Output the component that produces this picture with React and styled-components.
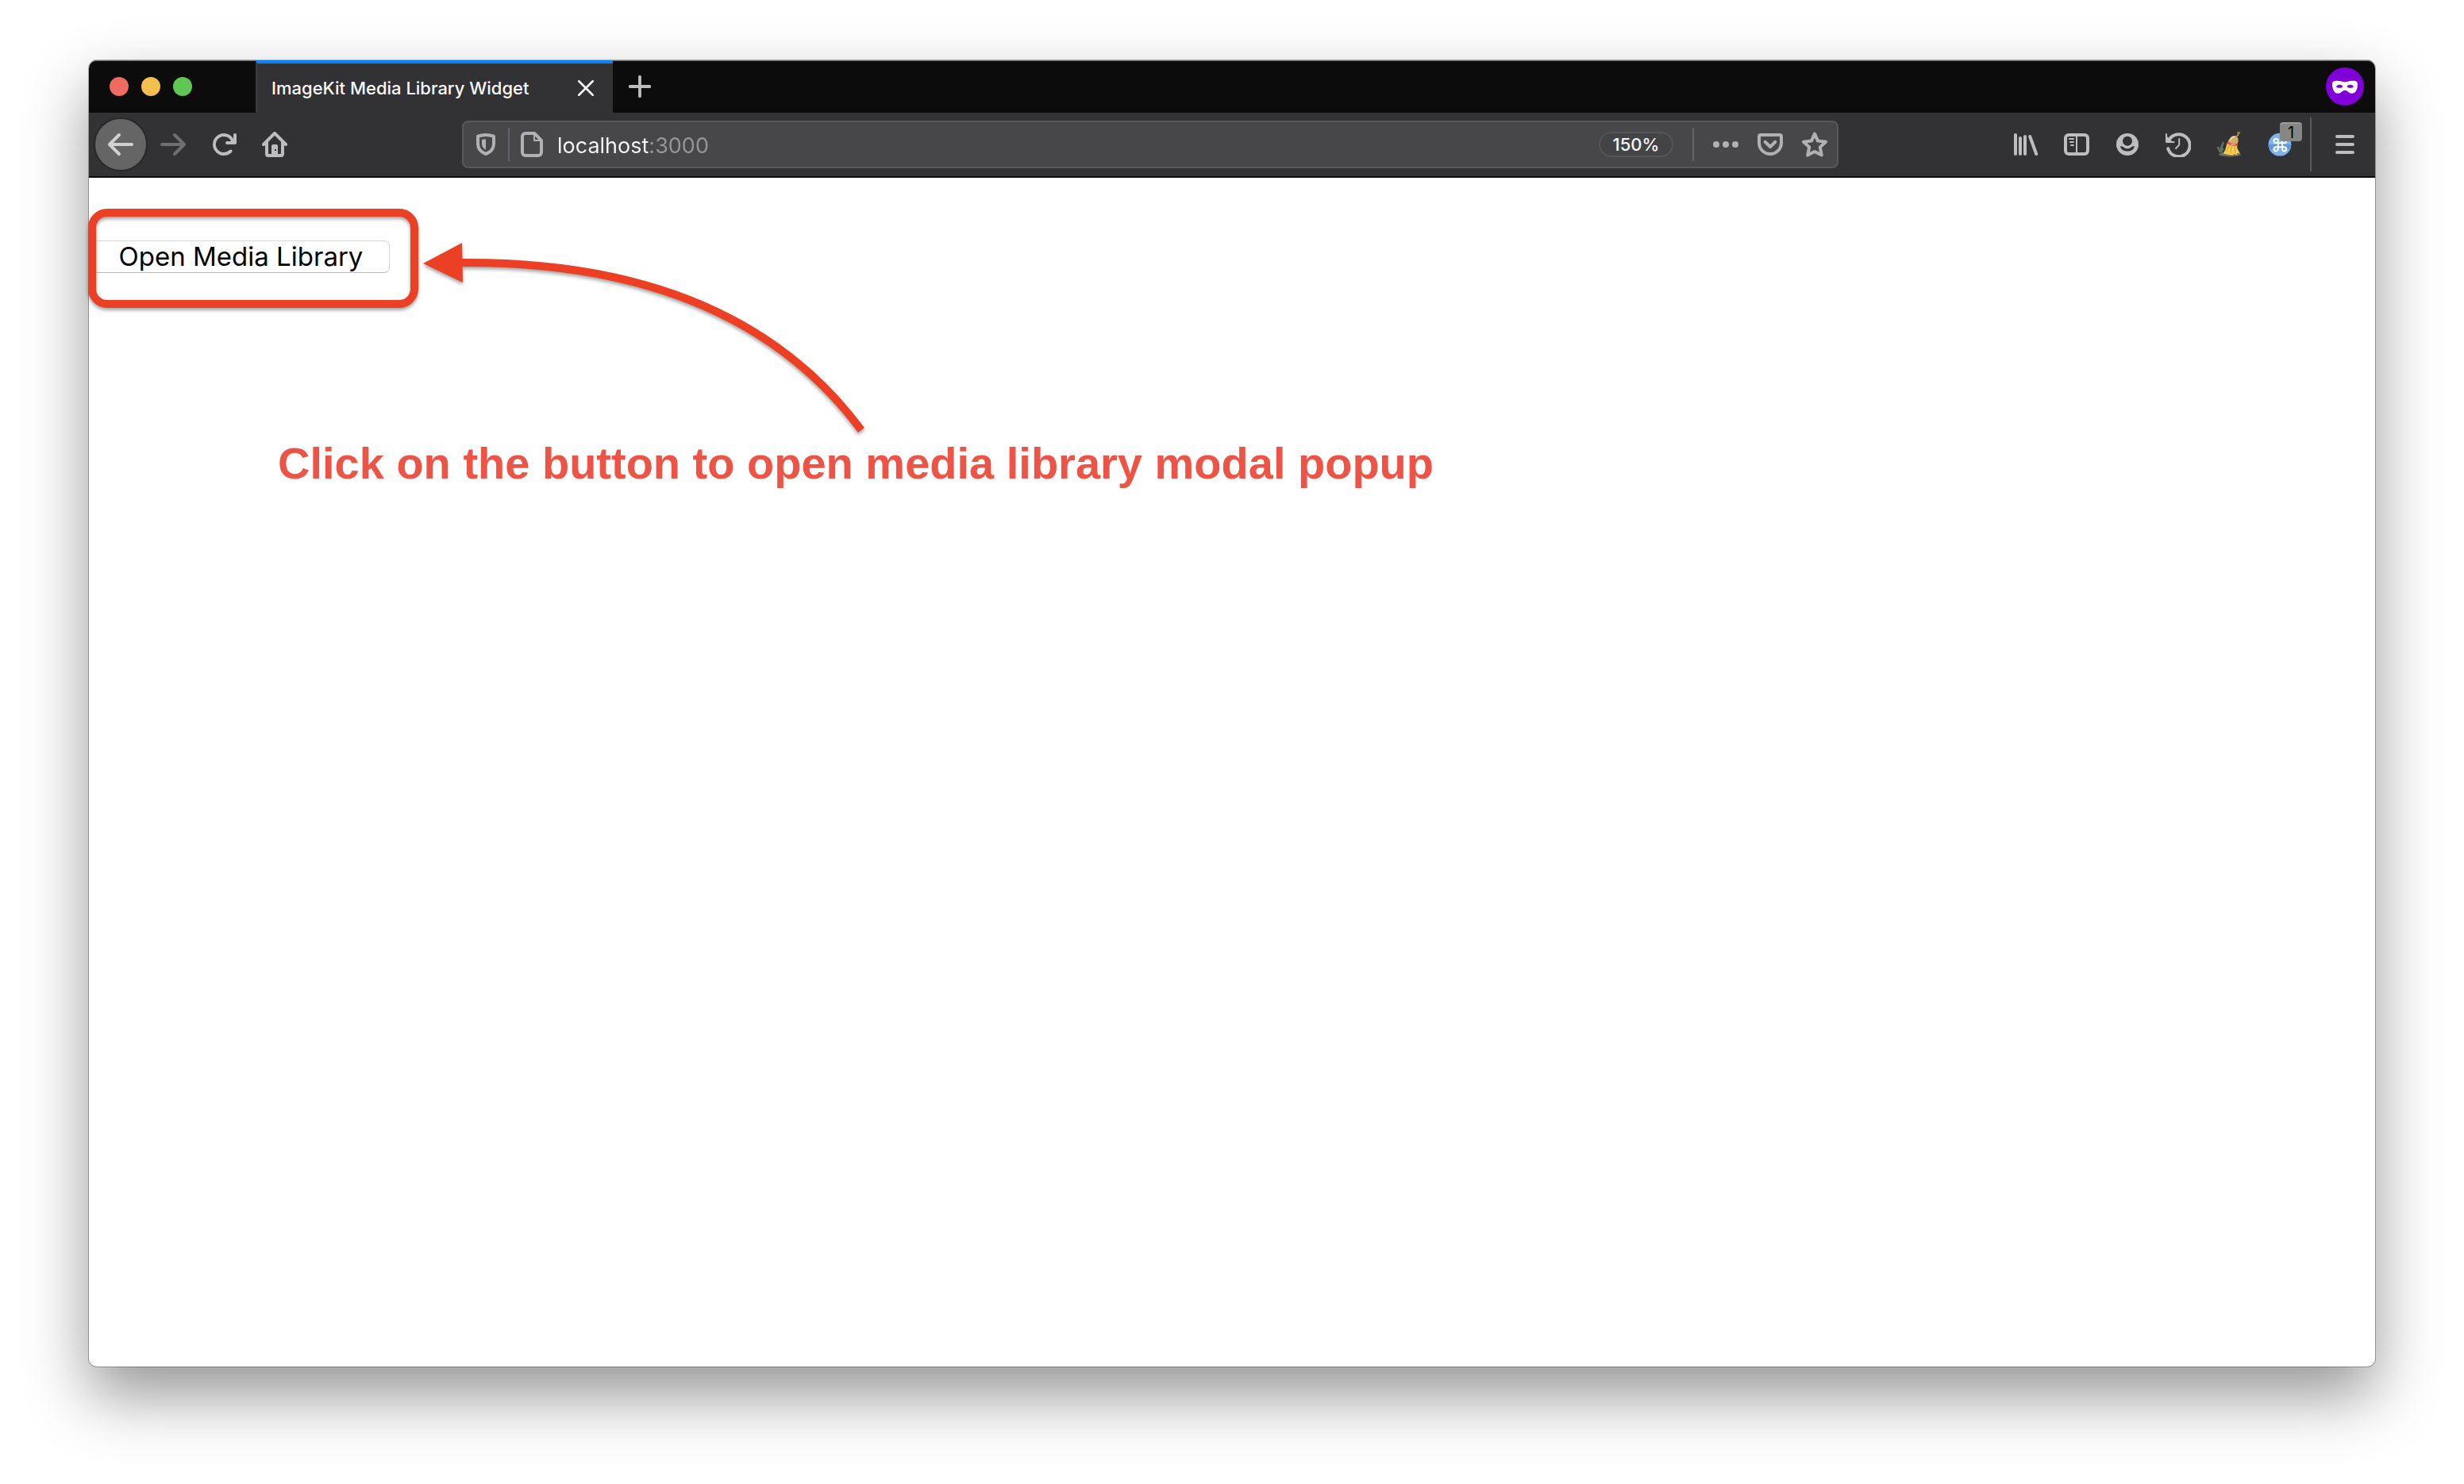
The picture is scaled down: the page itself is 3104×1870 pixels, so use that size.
import React from "react";
import styled, { createGlobalStyle } from "styled-components";

const ui = `Inter, Roboto, "Liberation Sans", sans-serif`;

const GlobalStyle = createGlobalStyle`
  *, *::before, *::after { box-sizing: border-box; }
  body { margin: 0; background: #fff; font-family: ${ui}; }
  button, input { font: inherit; color: inherit; }
`;

const Desktop = styled.div`
  display: flex;
  min-height: 100vh;
  padding: 76px 112px 148px;
`;

const BrowserWindow = styled.main`
  flex: 1;
  min-width: 0;
  display: flex;
  flex-direction: column;
  border-radius: 10px;
  background: #fff;
  box-shadow: 0 0 0 1px rgba(0, 0, 0, 0.28), 0 36px 80px rgba(0, 0, 0, 0.42);
`;

const TabStrip = styled.header`
  display: flex;
  align-items: center;
  height: 66px;
  padding-right: 14px;
  border-radius: 10px 10px 0 0;
  background: #0c0c0d;
  box-shadow: inset 0 2px 0 -1px #6d6d6e;
`;

const WindowControls = styled.div`
  display: flex;
  gap: 16px;
  width: 210px;
  padding-left: 26px;
`;

const Light = styled.button`
  width: 24px;
  height: 24px;
  padding: 0;
  border: 0;
  border-radius: 50%;
  background: ${(p) => p.$color};
`;

const Tab = styled.div`
  display: flex;
  align-items: center;
  justify-content: space-between;
  width: 450px;
  height: 66px;
  padding: 0 20px 0 18px;
  border-top: 4px solid #0a84ff;
  border-left: 2px solid #3b3b3d;
  background: #323234;
  color: #f9f9fa;
  font-size: 22px;
  font-weight: 500;
  line-height: 28px;
  white-space: nowrap;
`;

const IconButton = styled.button`
  position: relative;
  display: flex;
  flex: none;
  align-items: center;
  justify-content: center;
  width: ${(p) => p.$width || 64}px;
  height: ${(p) => p.$height || 64}px;
  padding: 0;
  border: 0;
  background: transparent;
  color: ${(p) => p.$color || "#bdbdbe"};
`;

const Spacer = styled.div`
  flex: 1;
`;

const PrivateBadge = styled.div`
  display: flex;
  align-items: center;
  justify-content: center;
  width: 48px;
  height: 48px;
  border-radius: 50%;
  background: #8000d7;
  color: #fff;
`;

const Toolbar = styled.nav`
  display: flex;
  align-items: center;
  height: 82px;
  padding: 0 6px;
  border-bottom: 2px solid #0c0c0d;
  background: #323234;
`;

const BackButton = styled(IconButton)`
  width: 68px;
  height: 68px;
  border: 2px solid #28282a;
  border-radius: 50%;
  background: #656566;
  color: #d2d2d2;
`;

const AddressBar = styled.div`
  display: flex;
  flex: 1;
  align-items: center;
  height: 60px;
  margin: 0 204px;
  padding: 0 0 0 12px;
  border: 2px solid #59595b;
  border-radius: 8px;
  background: #474749;
  color: #b1b1b3;
`;

const AddressDivider = styled.div`
  width: 2px;
  height: 42px;
  margin: 0 12px 0 ${(p) => p.$before}px;
  background: #5f6372;
`;

const AddressInput = styled.input`
  flex: 1;
  min-width: 0;
  height: 50px;
  margin-left: 16px;
  padding: 2px 0 0;
  border: 0;
  outline: 0;
  background: linear-gradient(90deg, #f9f9fa 116px, #96969a 116px);
  background-clip: text;
  -webkit-text-fill-color: transparent;
  font-size: 27px;
`;

const ZoomButton = styled.button`
  width: 94px;
  height: 32px;
  padding: 0;
  border: 2px solid #555557;
  border-radius: 16px;
  background: #444446;
  color: #f9f9fa;
  font-size: 22px;
  font-weight: 500;
  line-height: 28px;
`;

const MenuDivider = styled.div`
  width: 2px;
  height: 68px;
  margin: 0 10px 0 6px;
  background: #59595b;
`;

const CountBadge = styled.span`
  position: absolute;
  top: 4px;
  right: 4px;
  width: 28px;
  height: 24px;
  border-radius: 4px;
  border-top: 2px solid #9c9c9a;
  background: #868684;
  color: #000;
  font-size: 20px;
  line-height: 22px;
  text-align: center;
`;

const Page = styled.section`
  position: relative;
  flex: 1;
  padding: 79px 0 0 4px;
`;

const OpenButton = styled.button`
  display: block;
  width: 375px;
  height: 41px;
  padding: 0 0 2px;
  border: 1px solid #d5d5d5;
  border-bottom-color: #b9b9b9;
  border-radius: 7px;
  background: #fff;
  color: #000;
  font-size: 33px;
  line-height: 36px;
  white-space: nowrap;
`;

const Highlight = styled.div`
  position: absolute;
  top: 39px;
  left: -1px;
  width: 416px;
  height: 125px;
  border: 10px solid #ec4025;
  border-radius: 24px;
  filter: drop-shadow(0 3px 2px rgba(0, 0, 0, 0.35));
  pointer-events: none;
`;

const Arrow = styled.svg`
  position: absolute;
  top: 76px;
  left: 418px;
  filter: drop-shadow(0 3px 2px rgba(0, 0, 0, 0.35));
  pointer-events: none;
`;

const Caption = styled.p`
  margin: 208px 0 0 234px;
  color: #ee5446;
  font-family: "Liberation Sans", Arial, sans-serif;
  font-size: 56px;
  font-weight: 700;
  line-height: 64px;
`;

const Svg = ({ size = 32, children }) => (
  <svg width={size} height={size} viewBox="0 0 16 16" fill="currentColor" aria-hidden="true">
    {children}
  </svg>
);

const stroke = (width) => ({
  fill: "none",
  stroke: "currentColor",
  strokeWidth: width,
  strokeLinecap: "round",
  strokeLinejoin: "round",
});

const backPath =
  "M15 7H3.414l4.293-4.293a1 1 0 0 0-1.414-1.414l-6 6a1 1 0 0 0 0 1.414l6 6a1 1 0 0 0 1.414-1.414L3.414 9H15a1 1 0 0 0 0-2z";

const BackIcon = () => <Svg><path d={backPath} /></Svg>;
const ForwardIcon = () => <Svg><path d={backPath} transform="matrix(-1 0 0 1 16 0)" /></Svg>;

const ReloadIcon = () => (
  <Svg>
    <path d="M15 1a1 1 0 0 0-1 1v2.418A6.995 6.995 0 1 0 8 15a6.954 6.954 0 0 0 4.95-2.05 1 1 0 0 0-1.414-1.414A5.019 5.019 0 1 1 12.549 6H10a1 1 0 0 0 0 2h5a1 1 0 0 0 1-1V2a1 1 0 0 0-1-1z" />
  </Svg>
);

const HomeIcon = () => (
  <Svg>
    <path
      fillRule="evenodd"
      d="M15.707 7.293l-7-7a1 1 0 0 0-1.414 0l-7 7a1 1 0 0 0 1.414 1.414L2 8.414V14a2 2 0 0 0 2 2h8a2 2 0 0 0 2-2V8.414l.293.293a1 1 0 0 0 1.414-1.414zM12 13.500a.5.500 0 0 1-.5.500H10V9a1 1 0 0 0-1-1H7a1 1 0 0 0-1 1v5H4.500a.5.500 0 0 1-.5-.500V6.414l4-4 4 4zM8 11h1v1H8z"
    />
  </Svg>
);

const ShieldIcon = () => (
  <Svg>
    <path d="M8 2c1.700 0 3.300.25 5 .8v4.700c0 2.900-1.700 5.300-5 6.500-3.300-1.200-5-3.600-5-6.500V2.800C4.700 2.250 6.300 2 8 2z" {...stroke(2)} />
    <path d="M8 4.600v6.800c-1.700-.9-2.500-2.300-2.500-4V5z" />
  </Svg>
);

const FileIcon = () => (
  <Svg>
    <path d="M9.600 1H4a2 2 0 0 0-2 2v10a2 2 0 0 0 2 2h8a2 2 0 0 0 2-2V5.400z" {...stroke(2)} />
    <path d="M9.500 1v4.500H14" {...stroke(1)} />
  </Svg>
);

const MoreIcon = () => (
  <Svg>
    <circle cx="2" cy="8" r="2" />
    <circle cx="8" cy="8" r="2" />
    <circle cx="14" cy="8" r="2" />
  </Svg>
);

const PocketIcon = () => (
  <Svg>
    <path d="M2 2h12a1 1 0 0 1 1 1v4a7 7 0 0 1-14 0V3a1 1 0 0 1 1-1z" {...stroke(2)} />
    <path d="M4.800 6.400L8 9.500l3.200-3.100" {...stroke(2)} />
  </Svg>
);

const StarIcon = () => (
  <Svg>
    <path d="M8 1.300l2 4.500 5 .6-3.600 3.300 1 5.100L8 12.500l-4.400 2.300 1-5.100L1 6.400l5-.6z" {...stroke(2)} />
  </Svg>
);

const LibraryIcon = () => (
  <Svg>
    <path d="M1.500 2v12M4.500 4v10M7.500 3v11M10.600 3l4 11" {...stroke(2)} />
  </Svg>
);

const SidebarIcon = () => (
  <Svg>
    <rect x="1" y="2" width="14" height="12" rx="2" {...stroke(2)} />
    <path d="M3.500 4.500h2.500M4 6.500h2M4.500 8.500H6" {...stroke(1)} />
    <path d="M7.500 2h1v12h-1z" />
  </Svg>
);

const AccountIcon = () => (
  <Svg>
    <circle cx="8" cy="8" r="7" />
    <circle cx="8" cy="5.900" r="3" fill="#323234" />
    <path d="M3.500 9.200C4.600 8.900 5.200 9.400 5.800 9.900c1.300 1 3.100 1 4.400 0 .6-.5 1.200-1 2.300-.7-.4 1.900-2.300 3.100-4.500 3.100s-4.100-1.200-4.500-3.100z" fill="#323234" />
  </Svg>
);

const HistoryIcon = () => (
  <Svg>
    <path d="M2 5.600A7 7 0 1 1 1.600 10.600" {...stroke(2)} />
    <path d="M.5 1.500v5h4.800" {...stroke(1)} />
    <path d="M.5 2.500v4h4z" />
    <path d="M8.600 4.500v3.800L6.500 10.500" {...stroke(1)} />
  </Svg>
);

const BroomIcon = () => (
  <Svg>
    <ellipse cx="8.500" cy="14.300" rx="7" ry="1.400" fill="#6c6c66" />
    <path d="M2 13l2.500-6.500M.8 9.500l1.600 3M3 13.200l1.200-3" fill="none" stroke="#5f6f62" strokeWidth="1.300" />
    <path d="M12.300 3.400L13.700 2V.6h1" fill="none" stroke="#b28a30" strokeWidth="1" strokeLinecap="round" />
    <path d="M7 6.800L13.200 8.300l-.1 1.900 1.800 3.500-1.800-.3.200 1.200-2.300-.5-.6.700-2.400-.2-3.800-.8C6 11.800 6.100 9 7 6.800z" fill="#f3cb4e" />
    <path d="M7.800 8.800l-1.500 4M9.600 9.300l-.8 4.500M11.600 9.400l.3 4" fill="none" stroke="#cf9a2c" strokeWidth=".5" />
    <path d="M7.300 6.400C8 4.400 9.600 2.700 11.300 2.500c1.400 0 2.600 1.300 2.500 2.700 0 .9-.3 1.800-.6 2.500-2 .3-4.200-.2-5.900-1.300z" fill="#d9ab68" />
    <path d="M8.600 5.400c.6-1.200 1.500-2 2.500-2.200" fill="none" stroke="#f3d9a4" strokeWidth=".8" strokeLinecap="round" />
    <path d="M7.200 6.100c2 1.400 4.100 1.800 6.200 1.400l-.1 1.400c-2.300.4-4.700-.1-6.600-1.500z" fill="#e4534b" />
    <path d="M8.800 7.600c1 .4 2 .6 3 .6" fill="none" stroke="#f7b3ae" strokeWidth=".6" />
  </Svg>
);

const CommandIcon = () => (
  <Svg>
    <circle cx="8" cy="8.100" r="7.200" fill="#7fb2ec" />
    <path d="M.8 8a7.200 5.500 0 0 0 14.400 0z" fill="#5c99dc" />
    <path d="M2.300 11.400a6.800 6.800 0 0 0 11.400 0A12 12 0 0 0 2.300 11.400z" fill="#7fb2ec" />
    <path
      d="M6.900 7V5.700A1.300 1.300 0 1 0 5.600 7h5.200a1.300 1.300 0 1 0-1.300-1.300v5.200a1.300 1.300 0 1 0 1.300-1.300H5.600a1.300 1.300 0 1 0 1.300 1.300z"
      fill="none"
      stroke="#fff"
      strokeWidth="1"
    />
  </Svg>
);

const MenuIcon = () => (
  <Svg>
    <path d="M3 3h10M3 8h10M3 13h10" {...stroke(2)} />
  </Svg>
);

const CloseIcon = () => (
  <Svg size={20}>
    <path d="M1 1l14 14M15 1L1 15" {...stroke(2)} />
  </Svg>
);

const PlusIcon = () => (
  <Svg size={28}>
    <path d="M8 1v14M1 8h14" {...stroke(2.200)} />
  </Svg>
);

const MaskIcon = () => (
  <Svg>
    <path
      fillRule="evenodd"
      d="M0 6.500C0 5 1 4.400 3 4.400c2.200 0 3.500.8 5 .8s2.800-.8 5-.8c2 0 3 .6 3 2.100 0 3.500-1.400 5.900-3.700 5.900-2 0-2.600-2-4.300-2s-2.300 2-4.300 2C1.400 12.400 0 10 0 6.500zm2.500 1.700c.8.800 3.400 1 4.200-.1C5.900 6.400 3 6.500 2.500 8.200zm11 0c-.5-1.700-3.400-1.800-4.200-.1.800 1.100 3.400.9 4.200.1z"
    />
  </Svg>
);

export default function App() {
  return (
    <>
      <GlobalStyle />
      <Desktop>
        <BrowserWindow>
          <TabStrip>
            <WindowControls>
              <Light $color="#ed6b60" aria-label="Close window" />
              <Light $color="#f5bf4f" aria-label="Minimize window" />
              <Light $color="#62c655" aria-label="Zoom window" />
            </WindowControls>
            <Tab>
              <span>ImageKit Media Library Widget</span>
              <IconButton $width={28} $height={28} $color="#f9f9fa" aria-label="Close tab">
                <CloseIcon />
              </IconButton>
            </Tab>
            <IconButton $width={68} aria-label="New tab"><PlusIcon /></IconButton>
            <Spacer />
            <PrivateBadge><MaskIcon /></PrivateBadge>
          </TabStrip>

          <Toolbar>
            <BackButton aria-label="Back"><BackIcon /></BackButton>
            <IconButton $color="#6f6f70" aria-label="Forward"><ForwardIcon /></IconButton>
            <IconButton aria-label="Reload"><ReloadIcon /></IconButton>
            <IconButton aria-label="Home"><HomeIcon /></IconButton>
            <AddressBar>
              <IconButton $width={32} $height={48} $color="#b1b1b3" aria-label="Tracking protection">
                <ShieldIcon />
              </IconButton>
              <AddressDivider $before={12} />
              <IconButton $width={32} $height={48} $color="#b1b1b3" aria-label="Site information">
                <FileIcon />
              </IconButton>
              <AddressInput aria-label="Address" defaultValue="localhost:3000" />
              <ZoomButton>150%</ZoomButton>
              <AddressDivider $before={24} />
              <IconButton $width={56} $height={48} $color="#b1b1b3" aria-label="Page actions">
                <MoreIcon />
              </IconButton>
              <IconButton $width={56} $height={48} $color="#b1b1b3" aria-label="Save to Pocket">
                <PocketIcon />
              </IconButton>
              <IconButton $width={56} $height={48} $color="#b1b1b3" aria-label="Bookmark">
                <StarIcon />
              </IconButton>
            </AddressBar>
            <IconButton aria-label="Library"><LibraryIcon /></IconButton>
            <IconButton aria-label="Sidebars"><SidebarIcon /></IconButton>
            <IconButton aria-label="Account"><AccountIcon /></IconButton>
            <IconButton aria-label="History"><HistoryIcon /></IconButton>
            <IconButton aria-label="Clear cache"><BroomIcon /></IconButton>
            <IconButton aria-label="Shortcuts">
              <CommandIcon />
              <CountBadge>1</CountBadge>
            </IconButton>
            <MenuDivider />
            <IconButton aria-label="Menu"><MenuIcon /></IconButton>
          </Toolbar>

          <Page>
            <OpenButton>Open Media Library</OpenButton>
            <Caption>Click on the button to open media library modal popup</Caption>
            <Highlight />
            <Arrow width="570" height="260" viewBox="0 0 570 260" aria-hidden="true">
              <path d="M50 31Q396 28 555 242" fill="none" stroke="#ec4025" strokeWidth="10" />
              <path d="M3 32L52 6l1 50z" fill="#ec4025" />
            </Arrow>
          </Page>
        </BrowserWindow>
      </Desktop>
    </>
  );
}
